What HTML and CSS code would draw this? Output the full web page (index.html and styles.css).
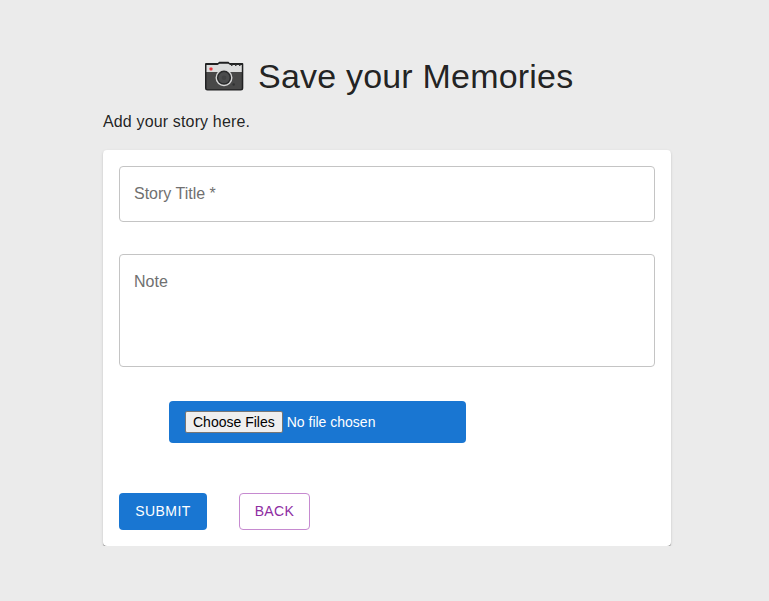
FILE: index.html
```html
<!DOCTYPE html>
<html lang="en">
<head>
<meta charset="utf-8">
<title>Save your Memories</title>
<link rel="stylesheet" href="styles.css">
</head>
<body>
<main class="page">
  <h1 class="title">
    <svg class="camera" viewBox="0 0 40 32" aria-hidden="true">
      <path d="M1 4q0-1 1-1h12l1-1.200h9.500l1.200 1.200H38.500q.8 0 .8 1v24q0 2.500-2.500 2.500H3.500Q1 30.500 1 28z" fill="#202122"/>
      <path d="M2.500 28V11.500h35.300V28q0 1.200-1.200 1.200h-33q-1.100 0-1.100-1.200z" fill="#484848"/>
      <path d="M2.500 12V5H13.500l2-1.200h8.800L26.200 5H37.800v7z" fill="#dcdddd"/>
      <path d="M27 4.500h1.500V6H27zM31 4.500h1.500V6H31zM35 4.500h1.500V6H35z" fill="#3b3c3d"/>
      <circle cx="20" cy="17.700" r="8.500" fill="#d8d8d8"/>
      <circle cx="20" cy="17.700" r="7.100" fill="#292a2b"/>
      <circle cx="20" cy="17.700" r="5.600" fill="#4b4c4d"/>
      <circle cx="20" cy="17.700" r="2.300" fill="#414243"/>
      <rect x="5.500" y="7.500" width="3" height="3" rx=".8" fill="#e8383e"/>
      <circle cx="29.700" cy="24.500" r="1.200" fill="#303132"/>
    </svg>
    <span>Save your Memories</span>
  </h1>
  <p class="intro">Add your story here.</p>
  <form class="card">
    <input class="field" type="text" placeholder="Story Title *">
    <textarea class="field note" placeholder="Note"></textarea>
    <div class="upload"><span class="choose">Choose Files</span><span>No file chosen</span></div>
    <div class="actions">
      <button class="button submit" type="button">SUBMIT</button>
      <button class="button back" type="button">BACK</button>
    </div>
  </form>
</main>
</body>
</html>
```
FILE: styles.css
```css
* { box-sizing: border-box; }
body {
  margin: 0;
  background: #ebebeb;
  font-family: "Liberation Sans", Arial, sans-serif;
  color: rgba(0, 0, 0, 0.87);
}
.page { width: 568px; margin: 0 auto 0 103px; padding-top: 55px; }
.title {
  display: flex;
  align-items: center;
  height: 42px;
  margin: 0 0 0 101px;
  font-size: 34px;
  font-weight: 400;
  letter-spacing: 0.2px;
  white-space: nowrap;
}
.camera { width: 40px; height: 32px; margin-right: 14px; }
.intro { margin: 13px 0 16px; font-size: 16px; line-height: 24px; letter-spacing: 0.15px; }
.card {
  height: 396px;
  padding: 16px;
  border-radius: 4px;
  background: #fff;
  box-shadow: 0 1px 0 rgba(0,0,0,.18), 0 2px 1px -1px rgba(0,0,0,.2), 0 1px 1px rgba(0,0,0,.14), 0 1px 3px rgba(0,0,0,.12);
}
.field {
  display: block;
  width: 536px;
  height: 56px;
  padding: 16px 14px;
  border: 1px solid #c4c4c4;
  border-radius: 4px;
  background: transparent;
  font: 16px/23px "Liberation Sans", Arial, sans-serif;
  letter-spacing: 0;
  resize: none;
}
.field::placeholder { color: #707070; opacity: 1; }
.note { height: 113px; margin-top: 32px; padding-top: 15px; }
.upload {
  display: flex;
  align-items: center;
  gap: 4px;
  width: 297px;
  height: 42px;
  margin: 34px 0 0 50px;
  padding: 0 16px;
  border-radius: 4px;
  background: #1976d2;
  color: #fff;
  font-size: 14px;
}
.choose {
  height: 22px;
  padding: 0 7px;
  border: 1px solid #767676;
  border-radius: 2px;
  background: #efefef;
  color: #000;
  line-height: 20px;
}
.actions { display: flex; gap: 32px; margin-top: 50px; }
.button {
  height: 37px;
  padding: 0 0 2px;
  border-radius: 4px;
  font: 14px/24px "Liberation Sans", Arial, sans-serif;
  letter-spacing: 0.4px;
}
.submit { width: 88px; border: 0; background: #1976d2; color: #fff; }
.back { width: 71px; border: 1px solid #c68ad0; background: #fff; color: #8e2da2; }
```
